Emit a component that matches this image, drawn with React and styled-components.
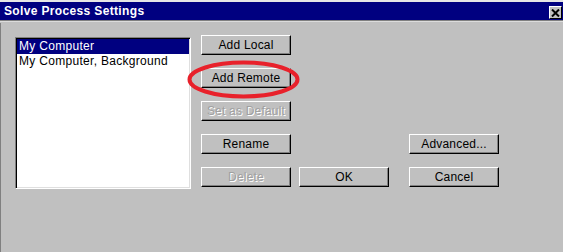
import styled, { createGlobalStyle } from 'styled-components';

const Global = createGlobalStyle`
  html, body { margin: 0; padding: 0; background: #c0c0c0; }
  body { font-family: "Liberation Sans", Arial, sans-serif; }
`;

const Window = styled.div`
  width: 563px;
  height: 252px;
  display: flex;
  flex-direction: column;
  background: #c0c0c0;
  overflow: hidden;
`;

const TitleBar = styled.div`
  height: 18px;
  margin-top: 2px;
  background: #000080;
  border-bottom: 1px solid #808080;
  box-shadow: 0 1px 0 #dcdcdc, 0 -2px 0 #e6e6e6;
  display: flex;
  align-items: center;
  justify-content: space-between;
  padding: 0 1px 0 4px;
`;

const Title = styled.span`
  color: #fff;
  font-weight: 700;
  font-size: 12px;
  letter-spacing: 0.35px;
`;

const CloseButton = styled.div`
  width: 11px;
  height: 11px;
  margin-top: 3px;
  background: #c0c0c0;
  border-top: 1px solid #fff;
  border-left: 1px solid #fff;
  border-bottom: 1px solid #000;
  border-right: 1px solid #000;
  display: flex;
  align-items: center;
  justify-content: center;
`;

const Body = styled.div`
  flex: 1;
  position: relative;
  border-left: 1px solid #808080;
  margin-top: 2px;
  padding: 12px 0 0 14px;
  display: flex;
  align-items: flex-start;
  gap: 10px;
`;

const ListBox = styled.div`
  margin-top: 2px;
  width: 172px;
  height: 148px;
  background: #fff;
  border-top: 1px solid #808080;
  border-left: 1px solid #808080;
  border-bottom: 1px solid #fff;
  border-right: 1px solid #fff;
  box-shadow: inset 1px 1px 0 #000, inset -1px -1px 0 #dfdfdf;
  padding: 1px;
`;

const ListItem = styled.div`
  height: 15px;
  line-height: 15px;
  font-size: 12px;
  letter-spacing: 0.3px;
  padding-left: 2px;
  color: ${(p) => (p.selected ? '#fff' : '#000')};
  background: ${(p) => (p.selected ? '#000080' : 'transparent')};
  white-space: nowrap;
`;

const ButtonGrid = styled.div`
  display: grid;
  grid-template-columns: 90px 8px 90px 20px 90px;
  grid-auto-rows: 20px;
  row-gap: 13px;
`;

const Button = styled.div`
  position: relative;
  grid-column: ${(p) => p.col * 2 - 1};
  grid-row: ${(p) => p.row};
  box-sizing: border-box;
  height: 20px;
  background: #c0c0c0;
  border-top: 1px solid #fff;
  border-left: 1px solid #fff;
  border-bottom: 1px solid #000;
  border-right: 1px solid #000;
  box-shadow: inset -1px -1px 0 #808080;
  display: flex;
  align-items: center;
  justify-content: center;
  font-size: 12px;
  letter-spacing: 0.2px;
  color: ${(p) => (p.disabled ? '#a0a0a0' : '#000')};
  text-shadow: ${(p) => (p.disabled ? '1px 1px 0 #fff' : 'none')};
  white-space: nowrap;
`;

const Highlight = styled.svg`
  position: absolute;
  left: -15px;
  top: -9px;
  width: 113px;
  height: 39px;
  overflow: visible;
  pointer-events: none;
`;

export default function App() {
  return (
    <>
      <Global />
      <Window>
        <TitleBar>
          <Title>Solve Process Settings</Title>
          <CloseButton>
            <svg width="9" height="8" viewBox="0 0 9 8">
              <path d="M1 0.5 L8 7.5 M8 0.5 L1 7.5" stroke="#000" strokeWidth="2" />
            </svg>
          </CloseButton>
        </TitleBar>
        <Body>
          <ListBox>
            <ListItem selected>My Computer</ListItem>
            <ListItem>My Computer, Background</ListItem>
          </ListBox>
          <ButtonGrid>
            <Button col={1} row={1}>Add Local</Button>
            <Button col={1} row={2}>
              Add Remote
              <Highlight viewBox="0 0 113 39">
                <ellipse cx="56.5" cy="19.5" rx="54" ry="17" fill="none" stroke="#e8212b" strokeWidth="4" />
              </Highlight>
            </Button>
            <Button col={1} row={3} disabled>Set as Default</Button>
            <Button col={1} row={4}>Rename</Button>
            <Button col={3} row={4}>Advanced...</Button>
            <Button col={1} row={5} disabled>Delete</Button>
            <Button col={2} row={5}>OK</Button>
            <Button col={3} row={5}>Cancel</Button>
          </ButtonGrid>
        </Body>
      </Window>
    </>
  );
}
